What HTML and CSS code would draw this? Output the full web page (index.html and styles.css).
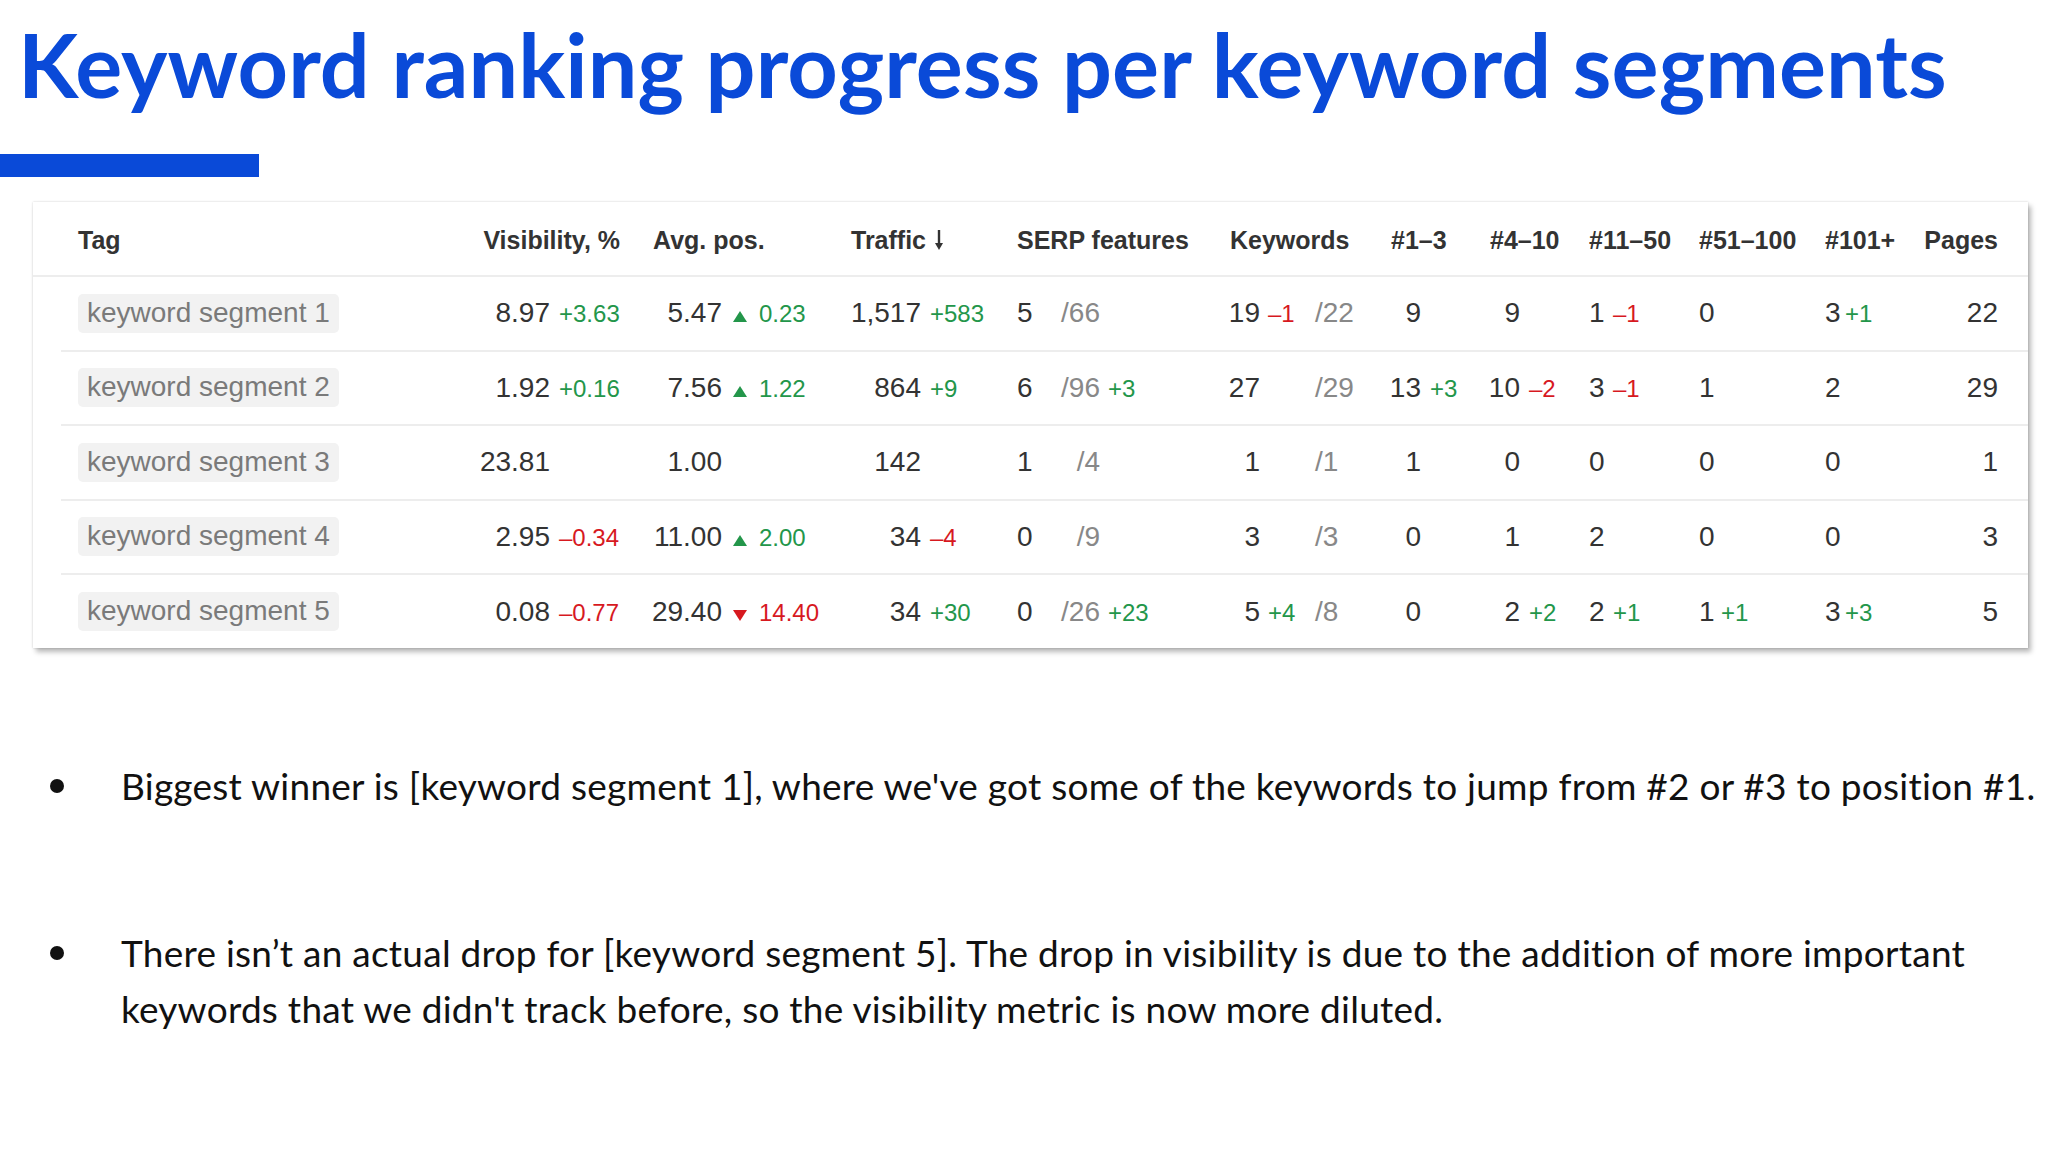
FILE: index.html
```html
<!DOCTYPE html>
<html lang="en">
<head>
<meta charset="utf-8">
<title>Keyword ranking progress per keyword segments</title>
<link rel="stylesheet" href="styles.css">
</head>
<body>
<h1 class="title">Keyword ranking progress per keyword segments</h1>
<div class="accent"></div>

<div class="card">
  <div class="row head">
    <div class="c tag">Tag</div>
    <div class="c vis">Visibility, %</div>
    <div class="c avg">Avg. pos.</div>
    <div class="c trf">Traffic<svg class="sort" width="10" height="22" viewBox="0 0 10 22"><path d="M5 1v17" stroke="#333" stroke-width="2.4" fill="none"/><path d="M1 14h8l-4 7z" fill="#333"/></svg></div>
    <div class="c serp">SERP features</div>
    <div class="c kw">Keywords</div>
    <div class="c p13">#1–3</div>
    <div class="c p410">#4–10</div>
    <div class="c p1150">#11–50</div>
    <div class="c p51">#51–100</div>
    <div class="c p101">#101+</div>
    <div class="c pages">Pages</div>
  </div>

  <div class="row">
    <div class="c tag"><span class="pill">keyword segment 1</span></div>
    <div class="c vis"><span class="v">8.97</span><span class="d up">+3.63</span></div>
    <div class="c avg"><span class="v">5.47</span><svg class="tri" width="14" height="11" viewBox="0 0 14 11"><path d="M7 0L14 11H0z" fill="#23964a"/></svg><span class="d up">0.23</span></div>
    <div class="c trf"><span class="v">1,517</span><span class="d up">+583</span></div>
    <div class="c serp"><span class="v">5</span><span class="s">/66</span><span class="d"></span></div>
    <div class="c kw"><span class="v">19</span><span class="d dn">–1</span><span class="s">/22</span></div>
    <div class="c p13"><span class="v">9</span></div>
    <div class="c p410"><span class="v">9</span></div>
    <div class="c p1150"><span class="v">1</span><span class="d dn">–1</span></div>
    <div class="c p51"><span class="v">0</span></div>
    <div class="c p101"><span class="v">3</span><span class="d up">+1</span></div>
    <div class="c pages"><span class="v">22</span></div>
  </div>

  <div class="row">
    <div class="c tag"><span class="pill">keyword segment 2</span></div>
    <div class="c vis"><span class="v">1.92</span><span class="d up">+0.16</span></div>
    <div class="c avg"><span class="v">7.56</span><svg class="tri" width="14" height="11" viewBox="0 0 14 11"><path d="M7 0L14 11H0z" fill="#23964a"/></svg><span class="d up">1.22</span></div>
    <div class="c trf"><span class="v">864</span><span class="d up">+9</span></div>
    <div class="c serp"><span class="v">6</span><span class="s">/96</span><span class="d up">+3</span></div>
    <div class="c kw"><span class="v">27</span><span class="d"></span><span class="s">/29</span></div>
    <div class="c p13"><span class="v">13</span><span class="d up">+3</span></div>
    <div class="c p410"><span class="v">10</span><span class="d dn">–2</span></div>
    <div class="c p1150"><span class="v">3</span><span class="d dn">–1</span></div>
    <div class="c p51"><span class="v">1</span></div>
    <div class="c p101"><span class="v">2</span></div>
    <div class="c pages"><span class="v">29</span></div>
  </div>

  <div class="row">
    <div class="c tag"><span class="pill">keyword segment 3</span></div>
    <div class="c vis"><span class="v">23.81</span></div>
    <div class="c avg"><span class="v">1.00</span></div>
    <div class="c trf"><span class="v">142</span></div>
    <div class="c serp"><span class="v">1</span><span class="s">/4</span><span class="d"></span></div>
    <div class="c kw"><span class="v">1</span><span class="d"></span><span class="s">/1</span></div>
    <div class="c p13"><span class="v">1</span></div>
    <div class="c p410"><span class="v">0</span></div>
    <div class="c p1150"><span class="v">0</span></div>
    <div class="c p51"><span class="v">0</span></div>
    <div class="c p101"><span class="v">0</span></div>
    <div class="c pages"><span class="v">1</span></div>
  </div>

  <div class="row">
    <div class="c tag"><span class="pill">keyword segment 4</span></div>
    <div class="c vis"><span class="v">2.95</span><span class="d dn">–0.34</span></div>
    <div class="c avg"><span class="v">11.00</span><svg class="tri" width="14" height="11" viewBox="0 0 14 11"><path d="M7 0L14 11H0z" fill="#23964a"/></svg><span class="d up">2.00</span></div>
    <div class="c trf"><span class="v">34</span><span class="d dn">–4</span></div>
    <div class="c serp"><span class="v">0</span><span class="s">/9</span><span class="d"></span></div>
    <div class="c kw"><span class="v">3</span><span class="d"></span><span class="s">/3</span></div>
    <div class="c p13"><span class="v">0</span></div>
    <div class="c p410"><span class="v">1</span></div>
    <div class="c p1150"><span class="v">2</span></div>
    <div class="c p51"><span class="v">0</span></div>
    <div class="c p101"><span class="v">0</span></div>
    <div class="c pages"><span class="v">3</span></div>
  </div>

  <div class="row">
    <div class="c tag"><span class="pill">keyword segment 5</span></div>
    <div class="c vis"><span class="v">0.08</span><span class="d dn">–0.77</span></div>
    <div class="c avg"><span class="v">29.40</span><svg class="tri" width="14" height="11" viewBox="0 0 14 11"><path d="M0 0H14L7 11z" fill="#d7191f"/></svg><span class="d dn">14.40</span></div>
    <div class="c trf"><span class="v">34</span><span class="d up">+30</span></div>
    <div class="c serp"><span class="v">0</span><span class="s">/26</span><span class="d up">+23</span></div>
    <div class="c kw"><span class="v">5</span><span class="d up">+4</span><span class="s">/8</span></div>
    <div class="c p13"><span class="v">0</span></div>
    <div class="c p410"><span class="v">2</span><span class="d up">+2</span></div>
    <div class="c p1150"><span class="v">2</span><span class="d up">+1</span></div>
    <div class="c p51"><span class="v">1</span><span class="d up">+1</span></div>
    <div class="c p101"><span class="v">3</span><span class="d up">+3</span></div>
    <div class="c pages"><span class="v">5</span></div>
  </div>
</div>

<ul class="notes">
  <li class="note"><span class="dot"></span><p>Biggest winner is [keyword segment 1], where we've got some of the keywords to jump from #2 or #3 to position #1.</p></li>
  <li class="note"><span class="dot"></span><p>There isn’t an actual drop for [keyword segment 5]. The drop in visibility is due to the addition of more important<br>keywords that we didn't track before, so the visibility metric is now more diluted.</p></li>
</ul>
</body>
</html>
```

FILE: styles.css
```css
html, body {
  margin: 0;
  padding: 0;
  background: #ffffff;
}

body {
  width: 2048px;
  height: 1152px;
  overflow: hidden;
  font-family: "Liberation Sans", Arial, sans-serif;
}

.title {
  margin: 0;
  padding: 14px 0 0 18px;
  height: 100px;
  font-family: Lato, "Noto Sans", sans-serif;
  font-weight: 700;
  font-size: 88px;
  line-height: 100px;
  letter-spacing: 0.1px;
  color: #0a4ad8;
  white-space: nowrap;
}

.accent {
  margin-top: 40px;
  width: 259px;
  height: 23px;
  background: #0a4ad8;
}

.card {
  margin: 25px 0 0 33px;
  width: 1995px;
  background: #fff;
  box-shadow: 0 0 2px rgba(0, 0, 0, 0.18), 3px 4px 5px rgba(0, 0, 0, 0.28);
}

.row {
  display: grid;
  grid-template-columns: 418px 161px 200px 170px 215px 155px 100px 105px 110px 125px 95px 113px;
  align-items: center;
  margin-left: 28px;
  height: 72.5px;
  border-bottom: 2px solid #ededed;
  font-size: 28px;
  color: #333;
}

.row:last-child {
  border-bottom: none;
  height: 73px;
}

.row.head {
  margin-left: 0;
  padding: 3px 0 0 28px;
  height: 70px;
  font-size: 25px;
  font-weight: 700;
  color: #333;
}

.c {
  display: flex;
  align-items: baseline;
  white-space: nowrap;
}

.v { color: #333; }
.s { color: #888; }
.d { font-size: 24px; }
.up { color: #23964a; }
.dn { color: #d7191f; }

.pill {
  margin-left: 17px;
  padding: 2px 9px 3px;
  background: #f2f2f2;
  border-radius: 5px;
  color: #7a7a7a;
  line-height: 34px;
}

.tri {
  margin-left: 11px;
  margin-bottom: 5px;
  flex: none;
}

.sort {
  margin-left: 8px;
  align-self: center;
}

/* column internals */
.head .tag { padding-left: 17px; }

.head .vis { justify-content: flex-end; padding-right: 20px; }
.vis .v { width: 71px; text-align: right; }
.vis .d { margin-left: 9px; }

.head .avg { padding-left: 13px; }
.avg .v { width: 82px; text-align: right; }
.avg .d { margin-left: 12px; }

.head .trf { padding-left: 11px; }
.trf .v { width: 81px; text-align: right; }
.trf .d { margin-left: 9px; }

.serp { padding-left: 7px; }
.serp .v { width: 33px; }
.serp .s { width: 50px; text-align: right; }
.serp .d { margin-left: 8px; }

.head .kw { padding-left: 5px; }
.kw .v { width: 35px; text-align: right; }
.kw .d { margin-left: 8px; width: 47px; }

.head .p13 { padding-left: 11px; }
.p13 .v { width: 41px; text-align: right; }
.p13 .d { margin-left: 9px; }

.head .p410 { padding-left: 10px; }
.p410 .v { width: 40px; text-align: right; }
.p410 .d { margin-left: 9px; }

.p1150 { padding-left: 4px; }
.p1150 .v { width: 24px; }

.p51 { padding-left: 4px; }
.p51 .v { width: 22px; }

.p101 { padding-left: 5px; }
.p101 .v { width: 20px; }

.pages { justify-content: flex-end; padding-right: 30px; }

/* notes */
.notes {
  list-style: none;
  margin: 110px 0 0 0;
  padding: 0;
  font-family: Lato, "Noto Sans", sans-serif;
  font-size: 37px;
  line-height: 56px;
  letter-spacing: 0.25px;
  color: #111;
}

.note {
  display: flex;
  align-items: flex-start;
}

.note + .note {
  margin-top: 111px;
}

.dot {
  flex: none;
  width: 14px;
  height: 14px;
  margin: 21px 0 0 50px;
  border-radius: 50%;
  background: #111;
}

.note p {
  margin: 0 0 0 57px;
  white-space: nowrap;
}
```
